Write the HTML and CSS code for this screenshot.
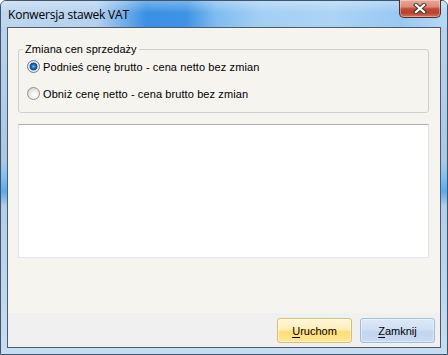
FILE: index.html
```html
<!DOCTYPE html>
<html lang="pl">
<head>
<meta charset="utf-8">
<title>Konwersja stawek VAT</title>
<link rel="stylesheet" href="styles.css">
</head>
<body>
<div class="window">
  <div class="titlebar">
    <span class="title">Konwersja stawek VAT</span>
    <button class="close" aria-label="Zamknij okno">
      <svg width="14" height="11" viewBox="0 0 14 11">
        <path d="M3 2 L11 9 M11 2 L3 9" stroke="#3b3b3b" stroke-width="4.2" stroke-linecap="square" fill="none"/>
        <path d="M3 2 L11 9 M11 2 L3 9" stroke="#ffffff" stroke-width="2.2" stroke-linecap="square" fill="none"/>
      </svg>
    </button>
  </div>
  <div class="client">
    <div class="content">
      <div class="group">
        <div class="legend">Zmiana cen sprzedaży</div>
        <label class="radio"><span class="dot checked"></span>Podnieś cenę brutto - cena netto bez zmian</label>
        <label class="radio"><span class="dot"></span>Obniż cenę netto - cena brutto bez zmian</label>
      </div>
      <div class="textbox"></div>
    </div>
    <div class="footer">
      <button class="btn btn-default"><u>U</u>ruchom</button>
      <button class="btn btn-blue"><u>Z</u>amknij</button>
    </div>
  </div>
</div>
</body>
</html>
```

FILE: styles.css
```css
* { box-sizing: border-box; }
html, body { margin: 0; padding: 0; }
body {
  width: 448px;
  height: 355px;
  overflow: hidden;
  background: #ffffff;
  font-family: Tahoma, "Liberation Sans", Arial, sans-serif;
  font-size: 11px;
  color: #000;
}

.window {
  width: 448px;
  height: 355px;
  display: flex;
  flex-direction: column;
  padding: 0 6px 6px 6px;
  border: 1px solid #3f556d;
  border-radius: 6px 6px 0 0;
  background:
    linear-gradient(to bottom, rgba(255,255,255,0) 0, rgba(255,255,255,0) 160px, rgba(110,190,245,0.7) 175px, rgba(70,160,235,0.8) 190px, rgba(255,255,255,0) 205px),
    linear-gradient(to bottom, #bcd5ec 0%, #aac8e4 45%, #b9d3eb 70%, #c6dcf0 100%);
}

.titlebar {
  height: 26px;
  margin: 0 -6px;
  padding: 0 6px 0 7px;
  display: flex;
  justify-content: space-between;
  align-items: flex-start;
  border-radius: 5px 5px 0 0;
  background:
    linear-gradient(to bottom, rgba(255,255,255,0.3) 0, rgba(255,255,255,0) 12px),
    linear-gradient(to right, #bfd7ee 0px, #b4d1ee 95px, #6eacea 125px, #3a90e4 145px, #3f93e5 185px, #7fbcf0 215px, #a3cff4 260px, #acd4f5 330px, #98c8f2 400px, #b6d9f5 446px);
}

.title {
  margin-top: 6px;
  font-family: "Open Sans", "Noto Sans", "DejaVu Sans", sans-serif;
  font-size: 12px;
  line-height: 15px;
  color: #000;
  letter-spacing: -0.2px;
}

.close {
  width: 42px;
  height: 18px;
  margin-top: -1px;
  padding: 0;
  display: flex;
  align-items: center;
  justify-content: center;
  border: 1px solid #4d2d2a;
  border-top: none;
  border-radius: 0 0 5px 5px;
  background: linear-gradient(to bottom, #e9a897 0%, #dc8a78 40%, #c04a35 52%, #b8412c 75%, #d5755c 100%);
  box-shadow: inset 0 0 0 1px rgba(255,255,255,0.35);
}

.client {
  flex: 1;
  display: flex;
  flex-direction: column;
  border: 1px solid #4e5a68;
  background: #f5f4ef;
}

.content {
  flex: 1;
  padding: 21px 11px 0 10px;
}

.group {
  height: 64px;
  border: 1px solid #d0d0c8;
  border-radius: 3px;
  padding: 0 0 0 8px;
}

.legend {
  width: fit-content;
  margin: -8px 0 0 -4px;
  padding: 0 2px;
  line-height: 14px;
  background: #f5f4ef;
  color: #000;
  letter-spacing: 0.05px;
}

.radio {
  display: flex;
  align-items: center;
  height: 13px;
  gap: 3px;
  white-space: nowrap;
  margin-top: 4px;
  letter-spacing: 0.1px;
}
.radio + .radio { margin-top: 14px; }

.dot {
  flex: none;
  width: 13px;
  height: 13px;
  border-radius: 50%;
  border: 1px solid #8f9091;
  background: radial-gradient(circle at 60% 65%, #ffffff 0, #f3f3f3 35%, #d6d6d6 75%, #c4c4c4 100%);
}
.dot.checked {
  border-color: #6f7a85;
  background: radial-gradient(circle at 50% 50%, #7fc3ef 0, #2c7ec6 1.5px, #13508f 3px, #1d5d9c 3.6px, #c5d3de 4.2px, #eef1f3 5px, #d2d4d6 6px);
}

.textbox {
  margin-top: 11px;
  height: 134px;
  background: #ffffff;
  border: 1px solid #e2e3ea;
  border-top-color: #abadb3;
  border-bottom-color: #e3e9ef;
}

.footer {
  height: 34px;
  flex: none;
  background: #f0f0f0;
  display: flex;
  justify-content: flex-end;
  align-items: flex-start;
  padding: 5px 5px 0 0;
  gap: 8px;
}

.btn {
  width: 75px;
  height: 25px;
  padding: 0;
  font-family: Tahoma, "Liberation Sans", Arial, sans-serif;
  font-size: 11px;
  color: #000;
  border-radius: 3px;
}
.btn u { text-decoration-thickness: 1px; text-underline-offset: 2px; }
.btn-default {
  border: 1px solid #d8bf71;
  background: linear-gradient(to bottom, #fff7dc 0%, #ffeeb8 45%, #ffde78 55%, #ffe693 100%);
  box-shadow: inset 0 0 0 1px rgba(255,255,255,0.5);
}
.btn-blue {
  border: 1px solid #a2bcdb;
  background: linear-gradient(to bottom, #dde8f6 0%, #d0e0f3 45%, #c2d6ef 55%, #c7daf1 100%);
  box-shadow: inset 0 0 0 1px rgba(255,255,255,0.4);
}
```
